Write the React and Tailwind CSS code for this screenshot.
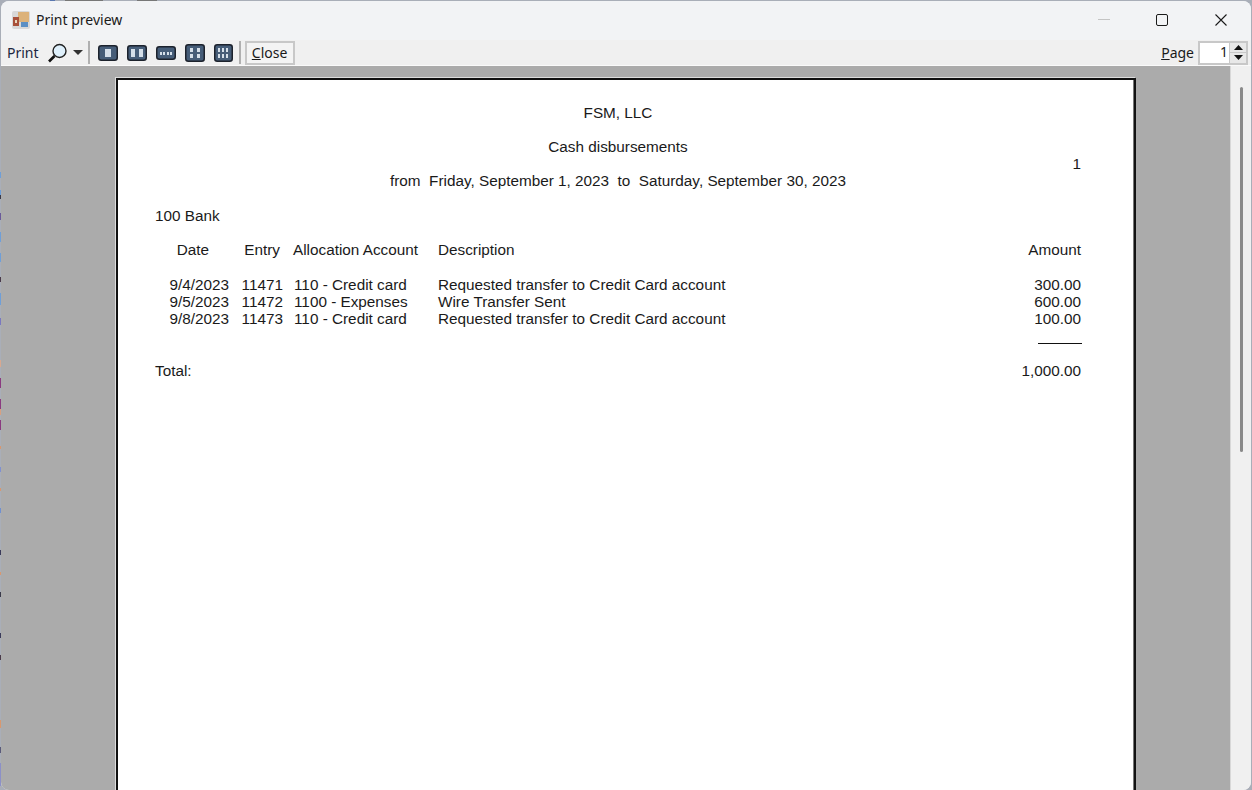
const font = { fontFamily: '"Liberation Sans", Arial, sans-serif' };

function Layout({ w, h, cells }) {
  return (
    <svg width={w} height={h} viewBox={`0 0 ${w} ${h}`}>
      <rect x="0.75" y="0.75" width={w - 1.5} height={h - 1.5} rx="2.5" fill="#465d78" stroke="#1c222c" strokeWidth="1.5" />
      {cells.map(([x, y, cw, ch], i) => (
        <rect key={i} x={x} y={y} width={cw} height={ch} fill="#d5dfe9" />
      ))}
    </svg>
  );
}

const icons = [
  { w: 20, h: 16, cells: [[7, 4, 6, 8]] },
  { w: 20, h: 16, cells: [[4, 4, 4, 8], [12, 4, 4, 8]] },
  { w: 20, h: 14, cells: [[4, 6, 2, 3], [7, 6, 2, 3], [11, 6, 2, 3], [14, 6, 2, 3]] },
  { w: 20, h: 18, cells: [[5, 4, 3, 4], [12, 4, 3, 4], [5, 10, 3, 4], [12, 10, 3, 4]] },
  { w: 19, h: 18, cells: [[4, 4, 2, 4], [8, 4, 2, 4], [12, 4, 2, 4], [4, 10, 2, 4], [8, 10, 2, 4], [12, 10, 2, 4]] },
];

const rows = [
  ["9/4/2023", "11471", "110 - Credit card", "Requested transfer to Credit Card account", "300.00"],
  ["9/5/2023", "11472", "1100 - Expenses", "Wire Transfer Sent", "600.00"],
  ["9/8/2023", "11473", "110 - Credit card", "Requested transfer to Credit Card account", "100.00"],
];

const specks = [
  [172, 6, "#6f9fd8"], [190, 8, "#6f9fd8"], [195, 4, "#3a3a4a"], [213, 7, "#6a5a9a"], [232, 10, "#6f9fd8"],
  [253, 9, "#6f9fd8"], [277, 5, "#4a3a4a"], [293, 12, "#6f9fd8"], [318, 7, "#7a78c0"], [360, 7, "#d8a890"],
  [378, 10, "#8a3a80"], [399, 10, "#8a3a80"], [409, 6, "#d8a080"], [420, 10, "#8a3a80"], [446, 3, "#d89870"],
  [467, 5, "#8090d0"], [488, 3, "#d89870"], [508, 5, "#7090d0"], [550, 5, "#3a3a5a"], [572, 3, "#d89870"],
  [592, 5, "#3a3a4a"], [633, 5, "#3a3a5a"], [655, 5, "#4a3a4a"], [720, 8, "#d89870"], [747, 6, "#5a5a7a"],
  [763, 23, "#8c90c8"],
];

const grid = "grid grid-cols-[74px_54px_155px_1fr_100px]";

export default function App() {
  return (
    <div style={font} className="relative w-[1252px] h-[790px] overflow-hidden bg-[#a9aeb8]">
      {specks.map(([y, h, c]) => (
        <div key={y} className="absolute left-0 w-px" style={{ top: y, height: h, background: c }} />
      ))}
      <div className="absolute top-0 left-[50px] w-[5px] h-px bg-[#5a78b0]" />
      <div className="absolute top-0 left-[65px] w-[38px] h-px bg-[#777777]" />
      <div className="absolute top-0 left-[137px] w-[20px] h-px bg-[#777777]" />
      <div className="relative ml-px mr-px mt-px h-[789px] rounded-t-lg rounded-b-lg overflow-hidden flex flex-col bg-[#f0f0f0]">
        <div className="h-[39px] shrink-0 flex items-center pb-[2px] bg-[#f2f3f5]">
          <div className="ml-[11px] mr-[6px] w-[18px] h-[18px]">
            <svg width="18" height="18" viewBox="0 0 18 18">
              <rect x="0" y="0" width="18" height="18" rx="2" fill="#d8d8d8" />
              <rect x="6" y="1" width="11" height="10" fill="#dcb27a" />
              <rect x="1" y="6" width="6" height="9" fill="#a8503a" />
              <rect x="3" y="9" width="2" height="3" fill="#e8d8c0" />
              <rect x="9" y="11" width="7" height="5" fill="#5b8fc4" />
            </svg>
          </div>
          <span className="text-[14px] text-[#1a1a1a] font-['Noto_Sans']">Print preview</span>
          <div className="ml-auto flex items-center h-full">
            <div className="w-[58px] flex justify-center"><div className="w-3 h-px bg-[#c4c4c4]" /></div>
            <div className="w-[58px] flex justify-center">
              <div className="w-[12px] h-[12px] border border-[#1a1a1a] rounded-[2px]" />
            </div>
            <div className="w-[60px] flex justify-center">
              <svg width="14" height="14" viewBox="0 0 14 14" stroke="#1a1a1a" strokeWidth="1.1">
                <path d="M1.5 1.5 L12.5 12.5 M12.5 1.5 L1.5 12.5" />
              </svg>
            </div>
          </div>
        </div>

        <div className="h-[26px] shrink-0 flex items-center bg-[#f0f0f0] border-b border-[#fafafa]">
          <span className="ml-[6px] text-[14px] text-[#1c2640] font-['Noto_Sans']">Print</span>
          <svg className="ml-[8px]" width="22" height="20" viewBox="0 0 22 20">
            <circle cx="12.5" cy="8" r="6.5" fill="#dff0fb" stroke="#222222" strokeWidth="1.4" />
            <path d="M7.5 13 L2 18.5" stroke="#111111" strokeWidth="2.6" />
          </svg>
          <svg className="ml-[4px]" width="10" height="6" viewBox="0 0 10 6"><path d="M0 0 H10 L5 5 Z" fill="#333333" /></svg>
          <div className="ml-[5px] w-[2px] h-[23px] bg-[#b0b0b0]" />
          <div className="ml-[8px] flex items-center gap-[9px]">
            {icons.map((c, i) => <Layout key={i} w={c.w} h={c.h} cells={c.cells} />)}
          </div>
          <div className="ml-[6px] w-[2px] h-[23px] bg-[#b0b0b0]" />
          <div className="ml-[4px] h-[24px] w-[50px] flex items-center justify-center border-2 border-[#c8c8c8] bg-[#f4f4f4] text-[14px] text-[#1a1a1a] font-['Noto_Sans']">
            <span><u>C</u>lose</span>
          </div>
          <span className="ml-auto mr-[4px] text-[14px] text-[#1a1a1a] font-['Noto_Sans']"><u>P</u>age</span>
          <div className="h-[24px] w-[50px] mr-[3px] flex border-2 border-[#c8c8c8] bg-white">
            <div className="flex-1 text-right text-[14px] leading-[18px] pr-[1px] text-[#1a1a1a] font-['Noto_Sans']">1</div>
            <div className="w-[17px] flex flex-col bg-[#e8e8e8] border-l border-[#c8c8c8]">
              <div className="flex-1 flex items-center justify-center border-b border-[#c8c8c8]">
                <svg width="9" height="5" viewBox="0 0 9 5"><path d="M0 5 L4.5 0 L9 5 Z" fill="#111111" /></svg>
              </div>
              <div className="flex-1 flex items-center justify-center">
                <svg width="9" height="5" viewBox="0 0 9 5"><path d="M0 0 L4.5 5 L9 0 Z" fill="#111111" /></svg>
              </div>
            </div>
          </div>
        </div>

        <div className="flex-1 flex min-h-0">
          <div className="flex-1 bg-[#ababab] pl-[115px] pt-[12px] overflow-hidden">
            <div className="w-[1020px] h-[800px] bg-white border-2 border-[#111111] shadow-[-1px_-1px_0_#dddddd,inset_-1px_0_0_#777777] pl-[37px] pr-[53px] text-[15.3px] text-[#1a1a1a]">
              <div className="relative text-center pt-[24px] leading-[17px]">
                <div className="h-[34px]">FSM, LLC</div>
                <div className="h-[34px]">Cash disbursements</div>
                <div className="h-[35px]">from&nbsp; Friday, September 1, 2023&nbsp; to&nbsp; Saturday, September 30, 2023</div>
                <div className="absolute right-0 top-[75px]">1</div>
              </div>
              <div className="h-[34px] leading-[17px]">100 Bank</div>
              <div className={grid + " h-[35px] leading-[17px]"}>
                <div className="text-right pr-[20px]">Date</div>
                <div className="text-right pr-[3px]">Entry</div>
                <div className="pl-[10px]">Allocation Account</div>
                <div>Description</div>
                <div className="text-right">Amount</div>
              </div>
              {rows.map((r) => (
                <div key={r[0]} className={grid + " h-[17px] leading-[17px]"}>
                  <div className="text-right">{r[0]}</div>
                  <div className="text-right">{r[1]}</div>
                  <div className="pl-[11px]">{r[2]}</div>
                  <div>{r[3]}</div>
                  <div className="text-right">{r[4]}</div>
                </div>
              ))}
              <div className="h-[35px] flex justify-end pt-[16px]">
                <div className="w-[44px] h-px mr-[-1px] bg-[#111111]" />
              </div>
              <div className="flex justify-between leading-[17px]">
                <span>Total:</span>
                <span>1,000.00</span>
              </div>
            </div>
          </div>
          <div className="w-[21px] shrink-0 bg-[#f0f0f0] flex justify-center pt-[21px] border-l border-[#d8d8d8]">
            <div className="w-[3px] h-[365px] bg-[#8a8a8a] rounded-full" />
          </div>
        </div>
      </div>
    </div>
  );
}
